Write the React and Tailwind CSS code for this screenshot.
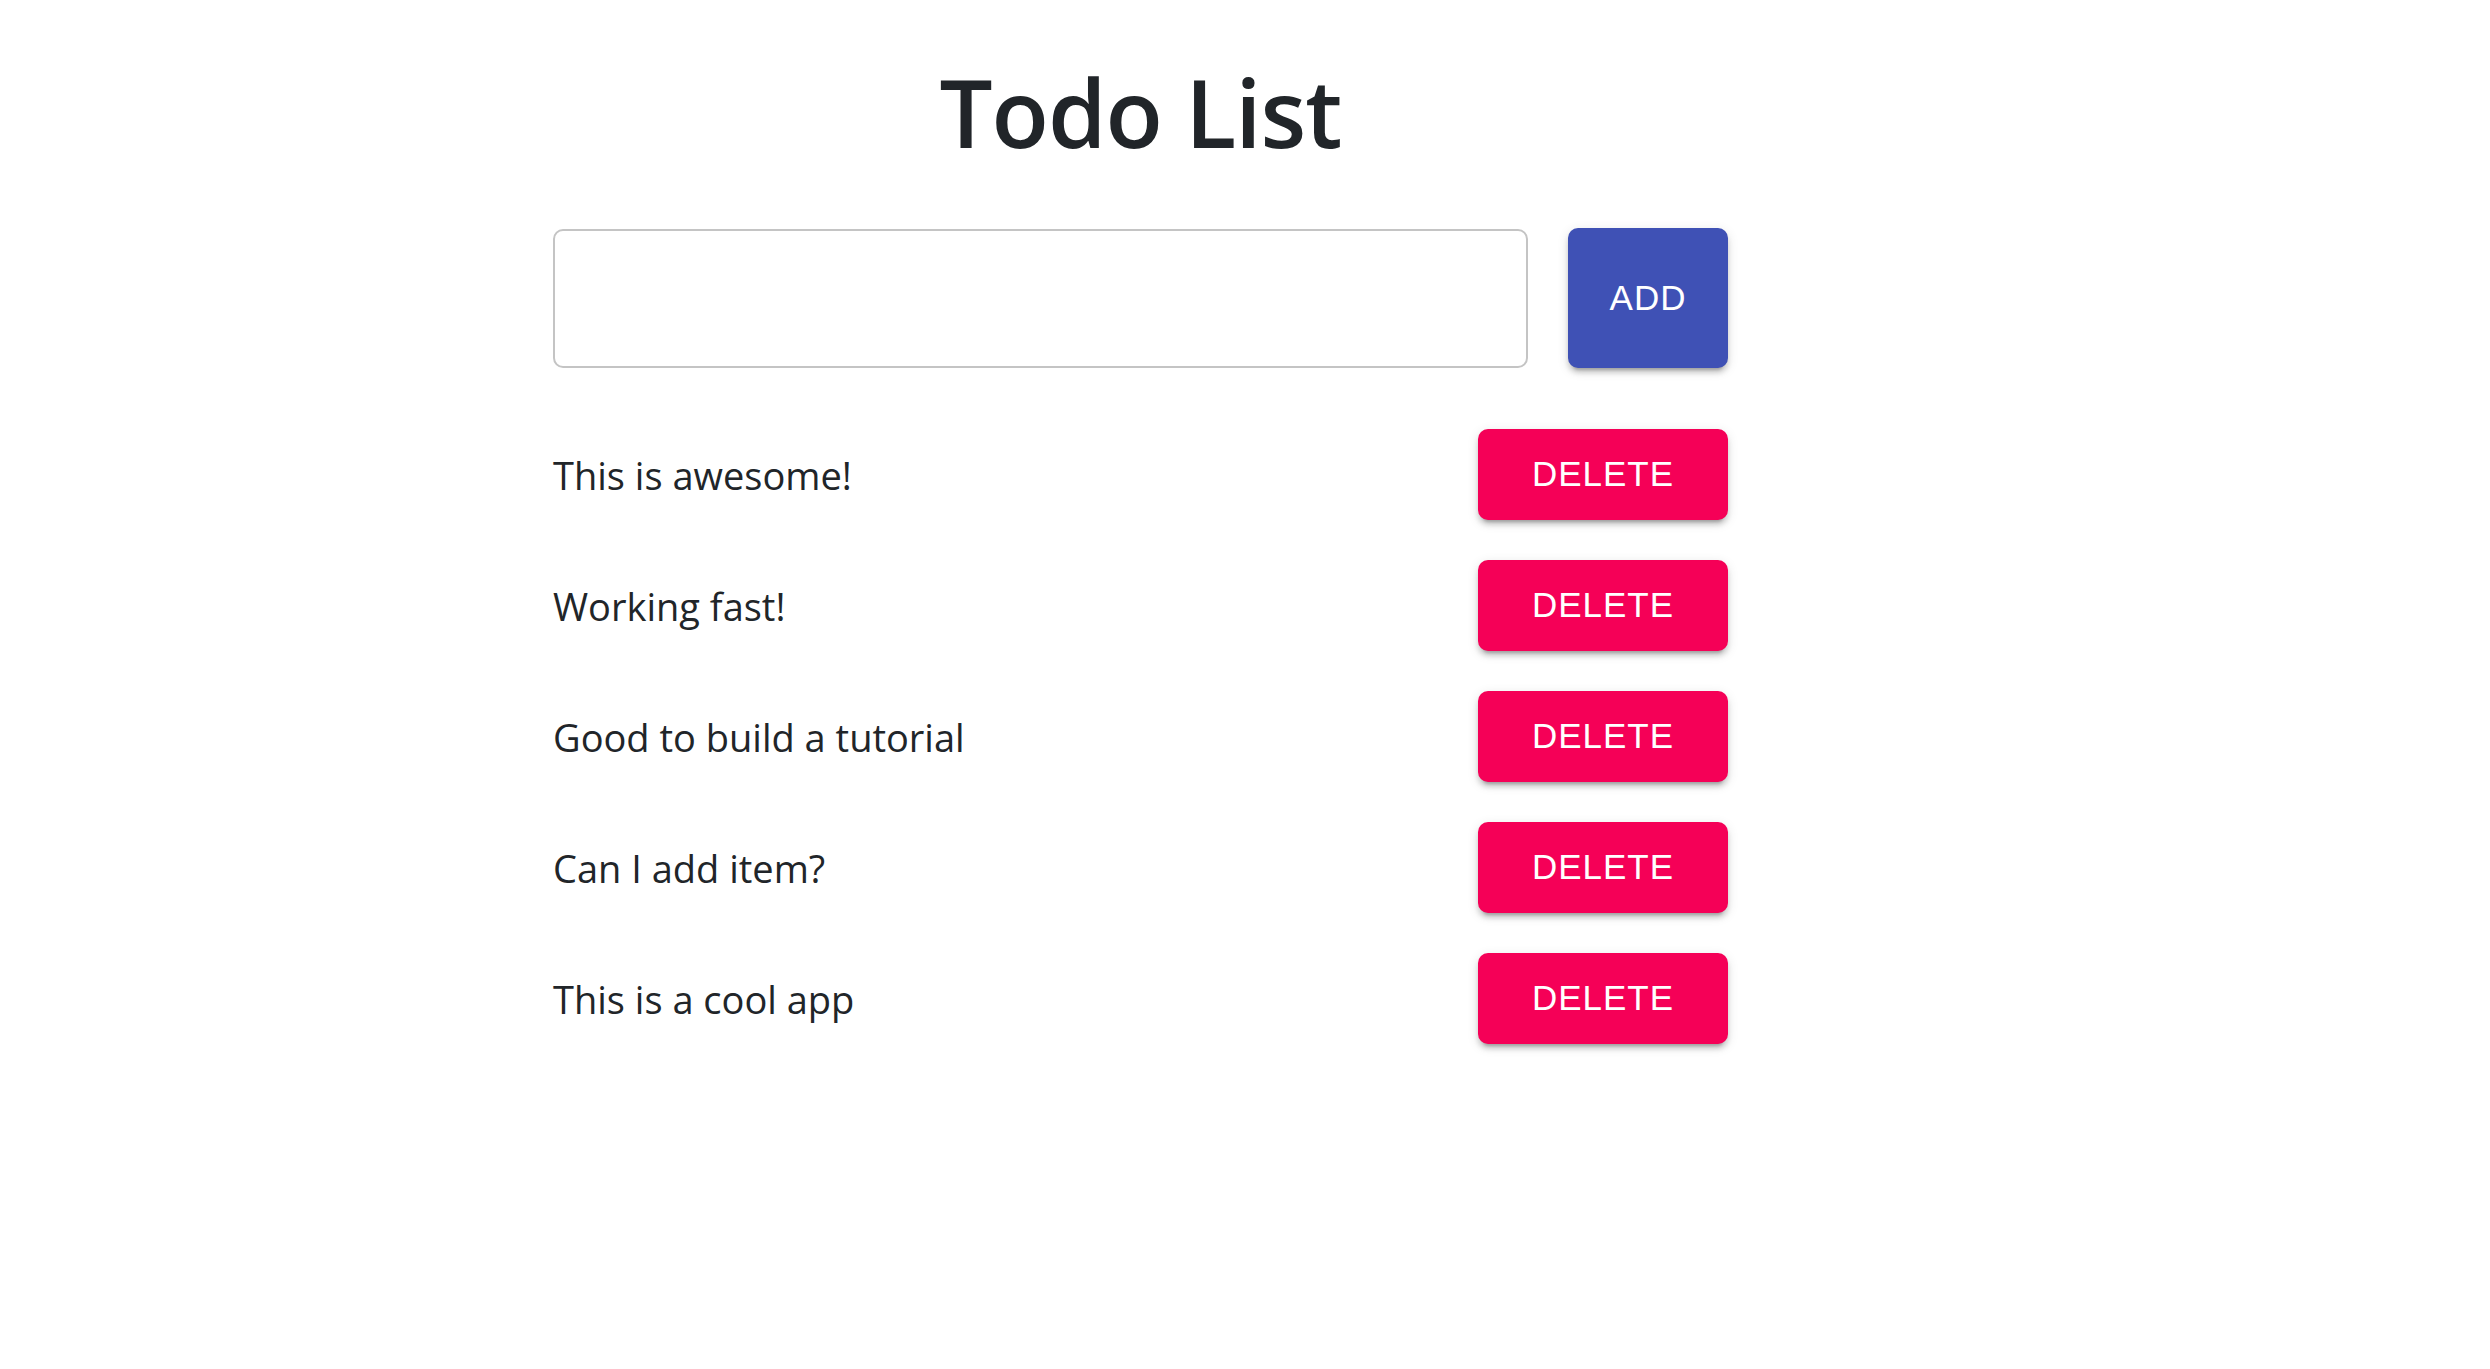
const items = [
  "This is awesome!",
  "Working fast!",
  "Good to build a tutorial",
  "Can I add item?",
  "This is a cool app",
];

export default function App() {
  return (
    <div className="min-h-screen bg-white text-[#212529]" style={{ fontFamily: "'Open Sans', 'Noto Sans', sans-serif" }}>
      <div className="ml-[553px] w-[1175px] pt-[52px]">
        <h1 className="text-center text-[94px] font-semibold leading-[120px] tracking-[-1px]">Todo List</h1>

        <div className="mt-[56px] flex items-center gap-[40px]">
          <input
            type="text"
            className="h-[139px] w-[975px] rounded-[10px] border-2 border-[#c4c4c4] px-[35px] text-[40px] outline-none"
          />
          <button
            className="h-[140px] w-[160px] rounded-[10px] bg-[#3f51b5] text-[35px] uppercase tracking-[1px] text-white shadow-[0_7px_3px_-5px_rgba(0,0,0,0.2),0_5px_5px_0_rgba(0,0,0,0.14),0_3px_12px_0_rgba(0,0,0,0.12)]"
            style={{ fontFamily: "'Liberation Sans', Arial, sans-serif" }}
          >
            Add
          </button>
        </div>

        <ul className="mt-[61px] flex flex-col gap-[40px]">
          {items.map((item, i) => (
            <li key={i} className="flex items-center justify-between">
              <span className="text-[38px] leading-[60px]">{item}</span>
              <button
                className="h-[91px] w-[250px] rounded-[10px] bg-[#f50057] text-[35px] uppercase tracking-[1px] text-white shadow-[0_7px_3px_-5px_rgba(0,0,0,0.2),0_5px_5px_0_rgba(0,0,0,0.14),0_3px_12px_0_rgba(0,0,0,0.12)]"
                style={{ fontFamily: "'Liberation Sans', Arial, sans-serif" }}
              >
                Delete
              </button>
            </li>
          ))}
        </ul>
      </div>
    </div>
  );
}
